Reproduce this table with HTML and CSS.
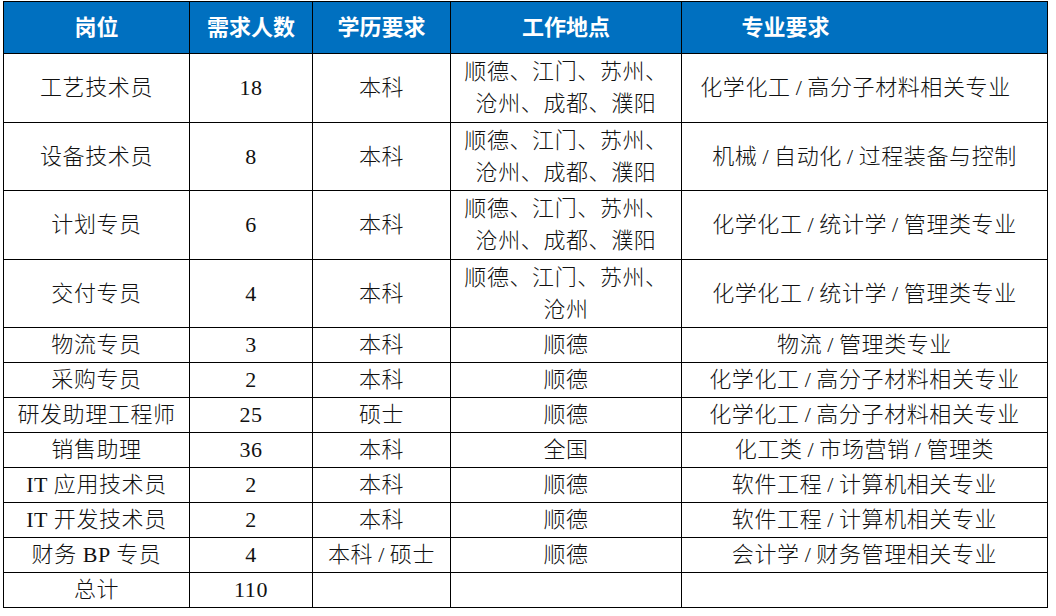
FILE: index.html
```html
<!DOCTYPE html>
<html lang="zh-CN">
<head>
<meta charset="utf-8">
<title>招聘岗位</title>
<link rel="stylesheet" href="styles.css">
</head>
<body>
<div class="wrap">
<table class="jobs">
  <colgroup>
    <col class="c1"><col class="c2"><col class="c3"><col class="c4"><col class="c5">
  </colgroup>
  <thead>
    <tr class="head">
      <th>岗位</th><th>需求人数</th><th>学历要求</th><th>工作地点</th><th class="major-h">专业要求</th>
    </tr>
  </thead>
  <tbody>
    <tr class="tall a"><td>工艺技术员</td><td>18</td><td>本科</td><td>顺德、江门、苏州、<br>沧州、成都、濮阳</td><td class="pad-r">化学化工<span class="sl">/</span>高分子材料相关专业</td></tr>
    <tr class="tall b"><td>设备技术员</td><td>8</td><td>本科</td><td>顺德、江门、苏州、<br>沧州、成都、濮阳</td><td>机械<span class="sl">/</span>自动化<span class="sl">/</span>过程装备与控制</td></tr>
    <tr class="tall a"><td>计划专员</td><td>6</td><td>本科</td><td>顺德、江门、苏州、<br>沧州、成都、濮阳</td><td>化学化工<span class="sl">/</span>统计学<span class="sl">/</span>管理类专业</td></tr>
    <tr class="tall b"><td>交付专员</td><td>4</td><td>本科</td><td>顺德、江门、苏州、<br>沧州</td><td>化学化工<span class="sl">/</span>统计学<span class="sl">/</span>管理类专业</td></tr>
    <tr class="short"><td>物流专员</td><td>3</td><td>本科</td><td>顺德</td><td>物流<span class="sl">/</span>管理类专业</td></tr>
    <tr class="short"><td>采购专员</td><td>2</td><td>本科</td><td>顺德</td><td>化学化工<span class="sl">/</span>高分子材料相关专业</td></tr>
    <tr class="short"><td>研发助理工程师</td><td>25</td><td>硕士</td><td>顺德</td><td>化学化工<span class="sl">/</span>高分子材料相关专业</td></tr>
    <tr class="short"><td>销售助理</td><td>36</td><td>本科</td><td>全国</td><td>化工类<span class="sl">/</span>市场营销<span class="sl">/</span>管理类</td></tr>
    <tr class="short"><td>IT 应用技术员</td><td>2</td><td>本科</td><td>顺德</td><td>软件工程<span class="sl">/</span>计算机相关专业</td></tr>
    <tr class="short"><td>IT 开发技术员</td><td>2</td><td>本科</td><td>顺德</td><td>软件工程<span class="sl">/</span>计算机相关专业</td></tr>
    <tr class="short"><td>财务 BP 专员</td><td>4</td><td>本科<span class="sl">/</span>硕士</td><td>顺德</td><td>会计学<span class="sl">/</span>财务管理相关专业</td></tr>
    <tr class="short"><td>总计</td><td>110</td><td></td><td></td><td></td></tr>
  </tbody>
</table>
<span class="handle"></span>
</div>
</body>
</html>
```
FILE: styles.css
```css
html, body {
  margin: 0;
  padding: 0;
  background: #ffffff;
}
.wrap {
  position: relative;
  padding: 1px 0 0 3px;
  width: 1045px;
}
.jobs {
  border-collapse: collapse;
  table-layout: fixed;
  width: 1044px;
  font-family: "Liberation Serif", "Noto Sans CJK SC", serif;
  font-size: 22px;
  font-weight: 300;
  color: #111;
  letter-spacing: 0.6px;
}
.c1 { width: 186px; }
.c2 { width: 123px; }
.c3 { width: 138px; }
.c4 { width: 231px; }
.c5 { width: 366px; }
.jobs th, .jobs td {
  border: 1px solid #000;
  padding: 0;
  text-align: center;
  vertical-align: middle;
  line-height: 32px;
  white-space: nowrap;
}
.jobs th {
  background: #0070c0;
  color: #fff;
  font-family: "Noto Sans CJK SC", sans-serif;
  font-weight: 700;
  font-size: 22px;
  letter-spacing: 0;
  padding-bottom: 6px;
}
.jobs th.major-h {
  padding-right: 158px;
}
.jobs td.pad-r {
  padding-right: 18px;
}
.sl {
  margin: 0 5px;
}
.head { height: 52px; }
.tall.a { height: 69px; }
.tall.b { height: 68px; }
.short { height: 35px; }
.handle {
  position: absolute;
  left: 1048px;
  top: 609px;
  width: 5px;
  height: 6px;
  border-top: 1px solid #b0b0b0;
  border-left: 1px solid #b0b0b0;
}
```
